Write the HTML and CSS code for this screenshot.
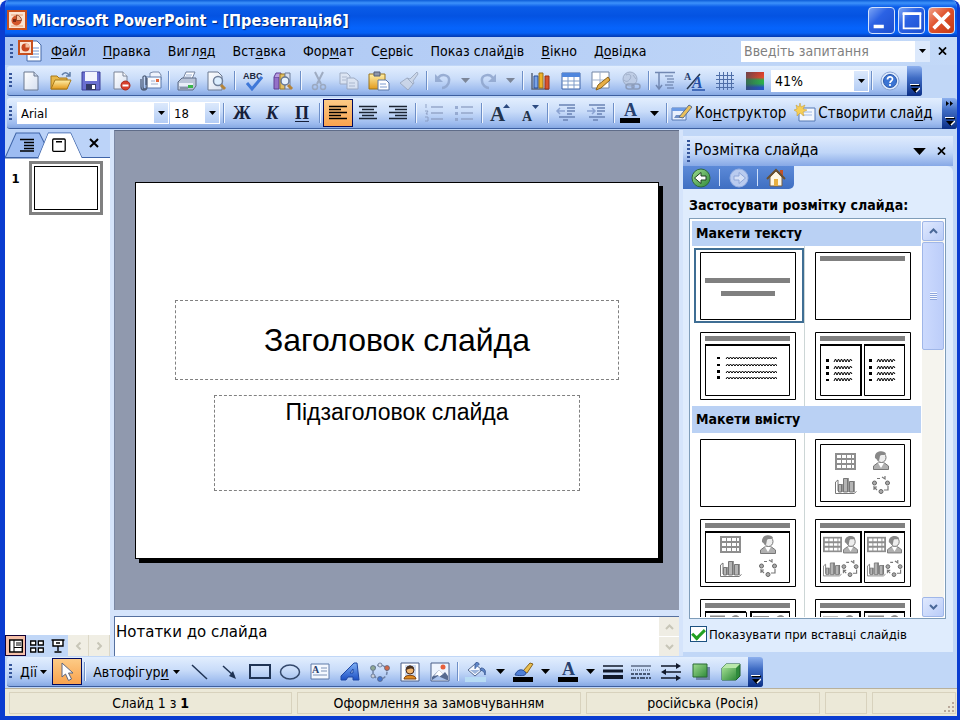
FILE: index.html
```html
<!DOCTYPE html>
<html lang="uk">
<head>
<meta charset="utf-8">
<title>Microsoft PowerPoint - [Презентація6]</title>
<link rel="stylesheet" href="styles.css">
</head>
<body>
<svg class="defs" aria-hidden="true">
  <defs>
    <linearGradient id="gold" x1="0" y1="0" x2="0" y2="1"><stop offset="0" stop-color="#fff0a8"/><stop offset="1" stop-color="#e39a1c"/></linearGradient>
    <linearGradient id="paper" x1="0" y1="0" x2="1" y2="1"><stop offset="0" stop-color="#fff"/><stop offset="1" stop-color="#d5dff0"/></linearGradient>
    <linearGradient id="grn" x1="0" y1="0" x2="1" y2="1"><stop offset="0" stop-color="#9fdc8f"/><stop offset="1" stop-color="#2f8a3a"/></linearGradient>
    <linearGradient id="bluA" x1="0" y1="0" x2="0" y2="1"><stop offset="0" stop-color="#7fb0f4"/><stop offset="1" stop-color="#1c4fc4"/></linearGradient>
    <linearGradient id="rgb" x1="0" y1="0" x2="0" y2="1"><stop offset="0" stop-color="#d93a2b"/><stop offset=".3" stop-color="#e84a2c"/><stop offset=".45" stop-color="#2fb34a"/><stop offset=".65" stop-color="#2bb04c"/><stop offset=".85" stop-color="#2456c8"/></linearGradient>
    <linearGradient id="shade" x1="0" y1="0" x2="1" y2="0"><stop offset="0" stop-color="#3a4658" stop-opacity=".65"/><stop offset="1" stop-color="#3a4658" stop-opacity="0"/></linearGradient>
  </defs>
  <symbol id="down" viewBox="0 0 9 5"><path d="M0 0h9L4.500 5z"/></symbol>
  <symbol id="more" viewBox="0 0 10 10"><path d="M1 1.500h9" stroke="#000" stroke-width="1.500"/><path d="M0 .5h9" stroke="#fff"/><path d="M1 4h9l-4.500 5z" fill="#000"/><path d="M6 8l4-4" stroke="#fff" stroke-width="1.500"/></symbol>
  <symbol id="chevU" viewBox="0 0 9 6"><path d="M1 5l3.500-3.500L8 5" fill="none" stroke="currentColor" stroke-width="2"/></symbol>
  <symbol id="chevD" viewBox="0 0 9 6"><path d="M1 1l3.500 3.500L8 1" fill="none" stroke="currentColor" stroke-width="2"/></symbol>
  <symbol id="cross" viewBox="0 0 10 9"><path d="M1 .5l8 8M9 .5l-8 8" fill="none" stroke="currentColor" stroke-width="2"/></symbol>
  <symbol id="g-table" viewBox="0 0 21 17"><path d="M0 0h21v17H0z" fill="#8e8e8e"/><path d="M2 2h4v3H2zM7 2h4v3H7zM12 2h4v3h-4zM2 7h4v3H2zM7 7h4v3H7zM12 7h4v3h-4zM2 12h4v3H2zM7 12h4v3H7zM12 12h4v3h-4zM17 2h2v3h-2zM17 7h2v3h-2zM17 12h2v3h-2z" fill="#fff"/></symbol>
  <symbol id="g-man" viewBox="0 0 16 19"><path d="M.5 18.500V15l4-3h7l4 3v3.500z" fill="#b0b0b0" stroke="#777"/><path d="M5 12l3 5 3-5z" fill="#fff"/><ellipse cx="8.500" cy="6.500" rx="4.500" ry="5" fill="#eee" stroke="#777"/><path d="M2 7C1-1 12-1 13 3c-3 2-5 0-6 2l-1 5z" fill="#888"/></symbol>
  <symbol id="g-chart" viewBox="0 0 22 17"><path d="M.5 5v11.500H19l2.500-2M.5 5L3 3v11" fill="none" stroke="#777"/><path d="M3.500 7.500h3V15h-3zM8.500 1.500h4V15h-4zM14.500 4.500h4V15h-4z" fill="#b5b5b5" stroke="#777"/><path d="M7 7v8M13 1v14M19 4v11" stroke="#777" stroke-width="1.500"/></symbol>
  <symbol id="g-cycle" viewBox="0 0 18 18"><g fill="#aaa" stroke="#666"><circle cx="2.500" cy="7" r="2"/><circle cx="15.500" cy="7" r="2"/><circle cx="9" cy="15.500" r="2"/></g><path d="M5 2.500h3M10 1l3 2v-3M12 14h4v-4M5 14l-3-3v3M2 11h3" fill="none" stroke="#777" stroke-width="1.200"/></symbol>
  <symbol id="bul" viewBox="0 0 60 24" preserveAspectRatio="none"><path d="M0 1h3v2H0zM0 8h3v2H0zM0 14h3v3H0zM0 20h3v3H0z"/><path id="zz" d="M9 3l1.500-2L12 3l1.500-2L15 3l1.500-2L18 3l1.500-2L21 3l1.500-2L24 3l1.500-2L27 3l1.500-2L30 3l1.500-2L33 3l1.500-2L36 3l1.500-2L39 3l1.500-2L42 3l1.500-2L45 3l1.500-2L48 3l1.500-2L51 3l1.500-2L54 3l1.500-2L57 3l1.500-2L60 3" fill="none" stroke="#000"/><use href="#zz" y="7"/><use href="#zz" y="14"/><use href="#zz" y="20"/></symbol>
  <symbol id="bul2" viewBox="0 0 27 24"><path d="M0 1h3v3H0zM0 8h3v3H0zM0 14h3v3H0zM0 21h3v2H0z"/><path id="zs" d="M8 4l1.500-3L11 4l1.500-3L14 4l1.500-3L17 4l1.500-3L20 4l1.500-3L23 4l1.500-3L26 3" fill="none" stroke="#000"/><use href="#zs" y="7"/><use href="#zs" y="13"/><use href="#zs" y="19"/></symbol>
  <symbol id="ppt" viewBox="0 0 20 20"><rect x="1" y="1" width="18" height="18" fill="#fbe3d2" stroke="#c8501e" stroke-width="2"/><path d="M4 5h12M4 16h12" stroke="#e9a179"/><circle cx="9.500" cy="10.500" r="5" fill="#d4562a"/><path d="M9.500 10.500V5a5.500 5.500 0 015 5.500z" fill="#f4bfa0" stroke="#7a2a10" stroke-width=".7"/><path d="M6 9h3v3H6z" fill="#7e2712"/></symbol>
</svg>

<div class="window">
  <header class="titlebar">
    <svg class="app" viewBox="0 0 20 20"><use href="#ppt"/></svg>
    <h1>Microsoft PowerPoint - [Презентація6]</h1>
    <button class="cap" aria-label="Згорнути"><svg viewBox="0 0 27 27"><path d="M5 18h11v4H5z" fill="#fff"/></svg></button>
    <button class="cap" aria-label="Розгорнути"><svg viewBox="0 0 27 27"><path d="M5 6h18v16H5z" fill="none" stroke="#fff" stroke-width="2"/><path d="M4 6h20" stroke="#fff" stroke-width="3"/></svg></button>
    <button class="cap close" aria-label="Закрити"><svg viewBox="0 0 27 27"><path d="M5 5l17 17M22 5L5 22" stroke="#fff" stroke-width="4"/></svg></button>
  </header>

  <nav class="menubar">
    <span class="grip"></span>
    <svg class="doc" viewBox="0 0 24 22"><path d="M9 1h10l4 4v16H9z" fill="#fff" stroke="#4468a8"/><path d="M15 8h6M15 11h6M12 14h9M12 17h9" stroke="#6e93cf"/><rect x="1" y="1" width="13" height="13" fill="#fbe3d2" stroke="#c8501e" stroke-width="2"/><circle cx="7.500" cy="7.500" r="4" fill="#c8481e"/><path d="M7.500 7.500V3.500a4 4 0 014 4z" fill="#f4bfa0"/></svg>
    <button><u>Ф</u>айл</button><button><u>П</u>равка</button><button>Вигл<u>я</u>д</button><button>Вст<u>а</u>вка</button><button>Фор<u>м</u>ат</button><button>С<u>е</u>рвіс</button><button>Показ слай<u>д</u>ів</button><button><u>В</u>ікно</button><button>Д<u>о</u>відка</button>
    <div class="ask"><input type="text" placeholder="Введіть запитання" aria-label="Введіть запитання"><button aria-label="Список"><svg class="dn"><use href="#down"/></svg></button></div>
    <button class="x" aria-label="Закрити вікно"><svg><use href="#cross"/></svg></button>
  </nav>

  <div class="row">
    <div class="bar">
      <span class="grip"></span>
      <button class="i" aria-label="Створити"><svg viewBox="0 0 20 20"><path d="M3 1h10l4 4v14H3z" fill="url(#paper)" stroke="#6a7890"/><path d="M13 1v4h4" fill="#cdd8ea" stroke="#6a7890"/></svg></button>
      <button class="i" aria-label="Відкрити"><svg viewBox="0 0 22 20"><path d="M1 18V5h6l2 2h8v11z" fill="#e8b84a" stroke="#a87818"/><path d="M1 18l4-9h16l-4 9z" fill="url(#gold)" stroke="#a87818"/><path d="M12 4c2-3 5-3 7 0M20 1v4h-4" fill="none" stroke="#5f7da8" stroke-width="1.500"/></svg></button>
      <button class="i" aria-label="Зберегти"><svg viewBox="0 0 20 20"><path d="M1 1h18v18H1z" fill="#6a6fd0" stroke="#3a3f98"/><path d="M4 1h12v9H4z" fill="#f2f4fd"/><path d="M5 13h10v6H5z" fill="#343a66"/><path d="M11 14h3v4h-3z" fill="#fff"/></svg></button>
      <button class="i" aria-label="Дозвіл"><svg viewBox="0 0 20 20"><path d="M3 1h9l4 4v13H3z" fill="url(#paper)" stroke="#7a8498"/><path d="M12 1v4h4" fill="#fff" stroke="#7a8498"/><circle cx="14.500" cy="14.500" r="4.500" fill="#d8402c" stroke="#a82818"/><path d="M11.500 14.500h6" stroke="#fff" stroke-width="2"/></svg></button>
      <button class="i" aria-label="Електронна пошта"><svg viewBox="0 0 22 20"><path d="M10 2l3-1h6l2 3v5H10z" fill="#eef3fc" stroke="#7b8cab"/><path d="M6 6h15v11H6z" fill="#f7faff" stroke="#5b78aa"/><path d="M11 13h7M11 10h4" stroke="#9fb0cc"/><path d="M16 8h3v3h-3z" fill="#e0653a"/><path d="M7 7v9a2 2 0 01-4 0V7a1 1 0 013-1v8M1 8v8c0 4 6 4 6 0" fill="none" stroke="#51607c" stroke-width="1.300"/></svg></button>
      <i class="sep"></i>
      <button class="i" aria-label="Друк"><svg viewBox="0 0 20 20"><path d="M6 8l3-7h9l-3 7z" fill="#fff" stroke="#7785a0"/><path d="M9 4h6M8 6h6" stroke="#9db2d6"/><path d="M1 11l4-4h14v8l-3 4H1z" fill="#b9c4d8" stroke="#5d6b86"/><path d="M2 12h14v3H2z" fill="#e9eef8"/><path d="M11 14h5v3h-5z" fill="#39b54a"/><path d="M3 17h8" stroke="#56627a"/></svg></button>
      <button class="i" aria-label="Перегляд"><svg viewBox="0 0 20 20"><path d="M1 1h10l4 4v14H1z" fill="url(#paper)" stroke="#6a7890"/><circle cx="11" cy="10" r="4.500" fill="#dceeff" stroke="#6f7f9a" stroke-width="1.500"/><path d="M14 14l4 4" stroke="#b5843a" stroke-width="3"/></svg></button>
      <i class="sep"></i>
      <button class="i" aria-label="Правопис"><svg viewBox="0 0 22 20"><text x="1" y="8" class="abc">ABC</text><path d="M5 12l5 6L20 6" fill="none" stroke="#3f78d8" stroke-width="3"/></svg></button>
      <button class="i" aria-label="Довідники"><svg viewBox="0 0 20 20"><path d="M1 6h5v12H1z" fill="#9470c8" stroke="#5e3f94"/><path d="M1 6l2-4h5v4" fill="#b89be0" stroke="#5e3f94"/><path d="M7 3h5v15H7z" fill="#e3c065" stroke="#9a7a24"/><path d="M12 2h5v16h-5z" fill="#d7dfef" stroke="#6f7f9a"/><circle cx="12" cy="10" r="4" fill="#e5f2ff" stroke="#667794" stroke-width="1.500"/><path d="M15 14l4 4" stroke="#b5843a" stroke-width="3"/></svg></button>
      <i class="sep"></i>
      <button class="i off" disabled aria-label="Вирізати"><svg viewBox="0 0 20 20"><g fill="none" stroke="#97a3b8"><path d="M6 1l6 12M14 1L8 13" stroke-width="2"/><circle cx="6" cy="16" r="2.500" stroke-width="1.500"/><circle cx="14" cy="16" r="2.500" stroke-width="1.500"/></g></svg></button>
      <button class="i off" disabled aria-label="Копіювати"><svg viewBox="0 0 20 20"><g fill="#dfe6f2" stroke="#98a4ba"><path d="M1 2h7l3 3v8H1z"/><path d="M8 7h7l4 3v8H8z"/></g><path d="M3 6h5M3 9h4M10 12h6M10 15h6" stroke="#a9b4c8"/></svg></button>
      <button class="i" aria-label="Вставити"><svg viewBox="0 0 22 20"><path d="M1 3h16v15H1z" fill="url(#gold)" stroke="#9a741c"/><path d="M6 1h6v4H6z" fill="#8e97ab" stroke="#525c74"/><path d="M10 9h8l3 3v7H10z" fill="#fff" stroke="#5b78aa"/><path d="M12 13h6M12 16h7" stroke="#7d9bd0"/></svg></button>
      <button class="i off" disabled aria-label="Формат за зразком"><svg viewBox="0 0 20 20"><path d="M18 1l-7 7-3-1-7 5 8 7 6-7-1-2 5-7z" fill="#ccd6e6" stroke="#9aa7bd"/><path d="M8 7l6 6" stroke="#9aa7bd"/></svg></button>
      <i class="sep"></i>
      <button class="i n off" disabled aria-label="Скасувати"><svg viewBox="0 0 20 20"><path d="M5 7c4-5 12-3 11 3 0 4-4 7-7 7" fill="none" stroke="#8fa5cd" stroke-width="2.500"/><path d="M2 3v8h8z" fill="#8fa5cd"/></svg></button>
      <button class="a off" disabled aria-label="Скасувати, список"><svg class="dn"><use href="#down"/></svg></button>
      <button class="i n off" disabled aria-label="Повторити"><svg viewBox="0 0 20 20"><path d="M15 7C11 2 3 4 4 10c0 4 4 7 7 7" fill="none" stroke="#8fa5cd" stroke-width="2.500"/><path d="M18 3v8h-8z" fill="#8fa5cd"/></svg></button>
      <button class="a off" disabled aria-label="Повторити, список"><svg class="dn"><use href="#down"/></svg></button>
      <i class="sep"></i>
      <button class="i" aria-label="Діаграма"><svg viewBox="0 0 20 20"><path d="M1 2v16h17" fill="none" stroke="#59657c" stroke-width="1.500"/><path d="M3 5h4v12H3z" fill="#7aa4e8" stroke="#284c94"/><path d="M8 2h4v15H8z" fill="#efb42a" stroke="#98701a"/><path d="M14 5h4v13h-4z" fill="#d8542c" stroke="#983018"/></svg></button>
      <button class="i" aria-label="Таблиця"><svg viewBox="0 0 20 18"><path d="M1 1h18v16H1z" fill="#fff" stroke="#3c63a8"/><path d="M1 1h18v4H1z" fill="#4f86dd"/><path d="M1 9h18M1 13h18M7 5v12M13 5v12" stroke="#7f9bc8"/></svg></button>
      <button class="i" aria-label="Таблиці та межі"><svg viewBox="0 0 20 20"><path d="M1 1h17v16H1z" fill="#fff" stroke="#7587a5"/><path d="M1 9h17M9 1v16" stroke="#9fb0cc"/><path d="M5 19l2-5 10-8 2 3-9 8z" fill="#e7ae45" stroke="#8a621a"/></svg></button>
      <button class="i off" disabled aria-label="Гіперпосилання"><svg viewBox="0 0 20 20"><circle cx="9" cy="8" r="7" fill="#bccae2" stroke="#97a5bf"/><path d="M5 4c4-2 6 1 4 4s-4 3-6 1M12 4l3 4" fill="none" stroke="#98a7c2"/><rect x="5" y="13" width="8" height="5" rx="2.500" fill="none" stroke="#8796b2" stroke-width="1.500"/><rect x="11" y="13" width="8" height="5" rx="2.500" fill="none" stroke="#8796b2" stroke-width="1.500"/></svg></button>
      <i class="sep t"></i>
      <button class="i" aria-label="Розгорнути все"><svg viewBox="0 0 20 20"><path d="M0 1.500h20M4 2v15M1 14l3 4 3-4" fill="none" stroke="#7288b2" stroke-width="1.500"/><path d="M10 5h8M12 8h7M12 11h7M10 14h8M12 17h7" stroke="#5f759e"/></svg></button>
      <button class="i" aria-label="Показати форматування"><svg viewBox="0 0 22 20"><text x="0" y="9" class="s9">A</text><path d="M3 18L16 3" stroke="#26374f" stroke-width="1.500"/><text x="8" y="17" class="s15">A</text><path d="M8 19h13" stroke="#2450a8" stroke-width="1.500"/></svg></button>
      <button class="i" aria-label="Сітка"><svg viewBox="0 0 20 20"><path d="M4.500 1v18M8.500 1v18M12.500 1v18M16.500 1v18M1 4.500h18M1 8.500h18M1 12.500h18M1 16.500h18" stroke="#4f6ea8"/></svg></button>
      <button class="i" aria-label="Колір"><svg viewBox="0 0 20 20"><path d="M1 1h18v18H1z" fill="url(#rgb)"/><path d="M1 1h18v18H1z" fill="url(#shade)"/></svg></button>
      <span class="combo zoom"><select aria-label="Масштаб"><option>41%</option></select><svg class="dn"><use href="#down"/></svg></span>
      <i class="sep"></i>
      <button class="i" aria-label="Довідка"><svg viewBox="0 0 20 20"><circle cx="10" cy="10" r="9" fill="#dbe8fb" stroke="#8aa4d4"/><circle cx="10" cy="10" r="6.500" fill="#3b74d4" stroke="#2856a8"/><path d="M7.500 8.500c0-3.500 5-3.500 5-.5 0 2-2.500 2-2.500 4M10 13v2" fill="none" stroke="#fff" stroke-width="1.700"/></svg></button>
      <button class="end" aria-label="Параметри панелі"><svg><use href="#more"/></svg></button>
    </div>
  </div>

  <div class="row fmt">
    <div class="bar full">
      <span class="grip"></span>
      <span class="combo font"><select aria-label="Шрифт"><option>Arial</option></select><svg class="dn"><use href="#down"/></svg></span>
      <span class="combo size"><select aria-label="Розмір шрифту"><option>18</option></select><svg class="dn"><use href="#down"/></svg></span>
      <i class="sep"></i>
      <button class="i l">Ж</button><button class="i l"><em>К</em></button><button class="i l"><u>П</u></button>
      <i class="sep"></i>
      <button class="i on" aria-label="За лівим краєм"><svg viewBox="0 0 20 20"><path d="M1 3.500h18M1 6.500h12M1 9.500h18M1 12.500h12M1 15.500h18" stroke="#000" stroke-width="1.500"/></svg></button>
      <button class="i" aria-label="По центру"><svg viewBox="0 0 20 20"><path d="M1 3.500h18M4 6.500h12M1 9.500h18M4 12.500h12M1 15.500h18" stroke="#1b2433" stroke-width="1.500"/></svg></button>
      <button class="i" aria-label="За правим краєм"><svg viewBox="0 0 20 20"><path d="M1 3.500h18M7 6.500h12M1 9.500h18M7 12.500h12M1 15.500h18" stroke="#1b2433" stroke-width="1.500"/></svg></button>
      <i class="sep"></i>
      <button class="i off" disabled aria-label="Нумерація"><svg viewBox="0 0 20 20"><path d="M7 4h12M7 10h12M7 16h12" stroke="#8d9fc2" stroke-width="1.500"/><path d="M2 1v4M1 8h3l-2 3h2M1 14h3v4H1" fill="none" stroke="#8698bd"/></svg></button>
      <button class="i off" disabled aria-label="Маркери"><svg viewBox="0 0 20 20"><path d="M7 4h12M7 10h12M7 16h12" stroke="#8d9fc2" stroke-width="1.500"/><path d="M1 3h3v3H1zM1 9h3v3H1zM1 15h3v3H1z" fill="#8fa3cb"/></svg></button>
      <i class="sep"></i>
      <button class="i" aria-label="Збільшити розмір шрифту"><svg viewBox="0 0 22 20"><text x="1" y="18" class="s20">A</text><path d="M14 5l3.500-4L21 5z" fill="#2c4a80"/></svg></button>
      <button class="i" aria-label="Зменшити розмір шрифту"><svg viewBox="0 0 22 20"><text x="3" y="18" class="s13">A</text><path d="M13 2h7l-3.500 4z" fill="#2c4a80"/></svg></button>
      <i class="sep"></i>
      <button class="i" aria-label="Зменшити відступ"><svg viewBox="0 0 20 20"><path d="M3 2h16M11 5h8M11 8h8M11 11h5M3 14h16M7 17h5" stroke="#6a82b4" stroke-width="1.500"/><path d="M9 8H2M4 5L1 8l3 3" fill="none" stroke="#8ba3d2" stroke-width="1.500"/></svg></button>
      <button class="i" aria-label="Збільшити відступ"><svg viewBox="0 0 20 20"><path d="M3 2h16M11 5h8M11 8h8M11 11h5M3 14h16M7 17h5" stroke="#6a82b4" stroke-width="1.500"/><path d="M1 8h7M6 5l3 3-3 3" fill="none" stroke="#8ba3d2" stroke-width="1.500"/></svg></button>
      <i class="sep t"></i>
      <button class="i" aria-label="Колір шрифту"><svg viewBox="0 0 20 20"><text x="4" y="13" class="s17">A</text><path d="M0 15h20v5H0z"/></svg></button>
      <button class="a" aria-label="Колір шрифту, список"><svg class="dn"><use href="#down"/></svg></button>
      <i class="sep"></i>
      <button class="txt"><svg viewBox="0 0 22 20"><path d="M1 5h14v12H1z" fill="#e9f1fd" stroke="#5578b4"/><path d="M1 5h14v3H1z" fill="#6c9be4"/><path d="M5 12h7v3H3z" fill="#6f8fc4"/><path d="M8 14l10-12 3 2-9 11z" fill="#e9c05a" stroke="#5a6c8a"/></svg><span>Ко<u>н</u>структор</span></button>
      <button class="txt"><svg viewBox="0 0 22 20"><path d="M5 5h16v13H5z" fill="#f3f7fe" stroke="#5578b4"/><path d="M8 9h10M8 12h10" stroke="#9eb8e4"/><path d="M6 0l1 4 4-2-2 4 4 1-4 2 1 4-4-3-3 3V9L0 7l3-1-1-4 3 2z" fill="#f6cf58" stroke="#c59628" stroke-width=".5"/></svg><span>Створити сла<u>й</u>д</span></button>
      <button class="end" aria-label="Параметри панелі"><svg class="raq" viewBox="0 0 8 6"><path d="M0 0l3 2.500L0 5zM4 0l3 2.500L4 5z"/></svg><svg><use href="#more"/></svg></button>
    </div>
  </div>

  <main class="work">
    <section class="outline">
      <div class="tabs">
        <svg class="tabshape" viewBox="0 0 104 26" preserveAspectRatio="none"><path d="M0 26L11 1h23l6 12-7 13z" fill="#9dbcf2" stroke="#3f64a8"/><path d="M0 25.500h33L43 1h22l11 24.500h28" fill="none" stroke="#3f64a8"/><path d="M33 26L43 1.500h22L76 26z" fill="#fff"/></svg>
        <button aria-label="Структура"><svg viewBox="0 0 14 14"><path d="M0 1.500h14M4 4.500h10M4 7.500h10M4 10.500h10M0 13h14" stroke="#000" stroke-width="1.500"/></svg></button>
        <button aria-label="Слайди"><svg viewBox="0 0 14 14"><rect x=".7" y="1" width="12.500" height="12.300" rx="1" fill="#fff" stroke="#000" stroke-width="1.300"/><path d="M4 3.700h6" stroke="#000" stroke-width="1.500"/></svg></button>
        <button class="tx" aria-label="Закрити"><svg><use href="#cross"/></svg></button>
      </div>
      <div class="thumbs"><b>1</b><button class="thumb" aria-label="Слайд 1"><span></span></button></div>
      <div class="views">
        <button class="on" aria-label="Звичайний"><svg viewBox="0 0 14 14"><path d="M.7 1h12.600v12H.7z" fill="#fff" stroke="#000" stroke-width="1.400"/><path d="M5 1v12M5 8.500h8M7 4h5M7 6h5" stroke="#000"/></svg></button>
        <button aria-label="Сортувальник"><svg viewBox="0 0 14 14"><path d="M.7 2h5v4h-5zM8.300 2h5v4h-5zM.7 9h5v4h-5zM8.300 9h5v4h-5z" fill="#fff" stroke="#000" stroke-width="1.300"/></svg></button>
        <button aria-label="Показ слайдів"><svg viewBox="0 0 14 14"><path d="M2 1.500h10V7H2z" fill="#fff"/><path d="M.5 1h13M2 1v6h10V1M5 4h4M7 7v5M3.500 13h7" fill="none" stroke="#000" stroke-width="1.400"/></svg></button>
        <button class="dis l" disabled aria-label="Ліворуч"><svg><use href="#chevU"/></svg></button>
        <button class="dis r" disabled aria-label="Праворуч"><svg><use href="#chevD"/></svg></button>
      </div>
    </section>

    <section class="center">
      <div class="stage"><div class="slide"><div class="ph title">Заголовок слайда</div><div class="ph sub">Підзаголовок слайда</div></div></div>
      <div class="notes"><p>Нотатки до слайда</p><div class="nscroll"><button disabled aria-label="Вгору"><svg><use href="#chevU"/></svg></button><button disabled aria-label="Вниз"><svg><use href="#chevD"/></svg></button></div></div>
    </section>

    <aside class="task">
      <header><span class="grip"></span><h2>Розмітка слайда</h2><button aria-label="Інші області"><svg class="big"><use href="#down"/></svg></button><button aria-label="Закрити"><svg class="tc"><use href="#cross"/></svg></button></header>
      <div class="tbody">
        <div class="nav">
          <button aria-label="Назад"><svg viewBox="0 0 20 20"><circle cx="10" cy="10" r="9" fill="url(#grn)" stroke="#2f6a3a"/><path d="M3.500 10L10 4.500V8h5v4h-5v3.500z" fill="#fff" stroke="#1f3f24"/></svg></button><i></i>
          <button disabled aria-label="Вперед"><svg viewBox="0 0 20 20"><circle cx="10" cy="10" r="9" fill="#b9cbef" stroke="#98b1e2"/><path d="M16.500 10L10 4.500V8H5v4h5v3.500z" fill="#d6e1f7" stroke="#8ea6d8"/></svg></button><i></i>
          <button aria-label="Додому"><svg viewBox="0 0 20 20"><path d="M14 2h3v6h-3z" fill="#c0522a"/><path d="M4 9l6-6 6 6v9H4z" fill="#fff8e6" stroke="#7a6040"/><path d="M1 11l9-9 9 9" fill="none" stroke="#6a5030" stroke-width="2"/><path d="M8 11h4v7H8z" fill="#e8b040"/></svg></button>
        </div>
        <h3>Застосувати розмітку слайда:</h3>
        <div class="list">
          <div class="items">
            <h4>Макети тексту</h4>
            <div class="grid">
              <button class="sel" aria-label="Титульний слайд"><svg viewBox="0 0 96 68"><path class="f" d="M.5.5h95v67H.5z"/><path class="g" d="M5 26h85v5H5zM21 39h54v5H21z"/></svg></button>
              <button aria-label="Лише заголовок"><svg viewBox="0 0 96 68"><path class="f" d="M.5.5h95v67H.5z"/><path class="g" d="M5 4h85v5H5z"/></svg></button>
              <button aria-label="Заголовок і текст"><svg viewBox="0 0 96 68"><path class="f" d="M.5.5h95v67H.5z"/><path class="g" d="M5 4h85v5H5z"/><path class="f" d="M5.500 13.500h84v50h-84z"/><path d="M5 13h85" stroke="#000" stroke-width="2"/><use href="#bul" x="17" y="24" width="60" height="24"/></svg></button>
              <button aria-label="Заголовок і текст у дві колонки"><svg viewBox="0 0 96 68"><path class="f" d="M.5.5h95v67H.5z"/><path class="g" d="M5 4h85v5H5z"/><path class="f" d="M5.500 13.500h41v50h-41zM49.500 13.500h40v50h-40z"/><path d="M5 13h41v51M49 13h41" fill="none" stroke="#000" stroke-width="2"/><use href="#bul2" x="11" y="26" width="27" height="24"/><use href="#bul2" x="54" y="26" width="27" height="24"/></svg></button>
            </div>
            <h4>Макети вмісту</h4>
            <div class="grid">
              <button aria-label="Порожній слайд"><svg viewBox="0 0 96 68"><path class="f" d="M.5.5h95v67H.5z"/></svg></button>
              <button aria-label="Вміст"><svg viewBox="0 0 96 68"><path class="f" d="M.5.5h95v67H.5zM5.500 5.500h84v57h-84z"/><use href="#g-table" x="20" y="14" width="21" height="17"/><use href="#g-man" x="58" y="12" width="16" height="19"/><use href="#g-chart" x="20" y="38" width="22" height="17"/><use href="#g-cycle" x="57" y="37" width="18" height="18"/></svg></button>
              <button aria-label="Заголовок і вміст"><svg viewBox="0 0 96 68"><path class="f" d="M.5.5h95v67H.5z"/><path class="g" d="M5 4h85v5H5z"/><path class="f" d="M5.500 13.500h84v50h-84z"/><path d="M5 13h85" stroke="#000" stroke-width="2"/><use href="#g-table" x="20" y="17" width="21" height="17"/><use href="#g-man" x="60" y="16" width="16" height="19"/><use href="#g-chart" x="20" y="41" width="22" height="17"/><use href="#g-cycle" x="59" y="40" width="18" height="18"/></svg></button>
              <button aria-label="Заголовок і два об’єкти"><svg viewBox="0 0 96 68"><path class="f" d="M.5.5h95v67H.5z"/><path class="g" d="M5 4h85v5H5z"/><path class="f" d="M5.500 13.500h41v50h-41zM49.500 13.500h40v50h-40z"/><path d="M5 13h41v51M49 13h41" fill="none" stroke="#000" stroke-width="2"/><use href="#g-table" x="8" y="17" width="19" height="17"/><use href="#g-man" x="28" y="16" width="15" height="19"/><use href="#g-chart" x="8" y="41" width="19" height="18"/><use href="#g-cycle" x="26" y="41" width="18" height="17"/><use href="#g-table" x="52" y="17" width="19" height="17"/><use href="#g-man" x="72" y="16" width="15" height="19"/><use href="#g-chart" x="52" y="41" width="19" height="18"/><use href="#g-cycle" x="70" y="41" width="18" height="17"/></svg></button>
              <button aria-label="Об’єкт і два об’єкти"><svg viewBox="0 0 96 68"><path class="f" d="M.5.5h95v67H.5z"/><path class="g" d="M5 4h85v5H5z"/><path class="f" d="M5.500 13.500h41v50h-41zM50.500 13.500h39v50h-39z"/><path d="M5 13h41M51 64V13h39" fill="none" stroke="#000" stroke-width="2"/><path d="M10 18h15" stroke="#888" stroke-width="3"/><use href="#g-man" x="29" y="16" width="13" height="14"/><use href="#g-table" x="53" y="17" width="16" height="13"/><use href="#g-man" x="74" y="16" width="13" height="14"/></svg></button>
              <button aria-label="Два об’єкти й об’єкт"><svg viewBox="0 0 96 68"><path class="f" d="M.5.5h95v67H.5z"/><path class="g" d="M5 4h85v5H5z"/><path class="f" d="M5.500 13.500h39v50h-39zM49.500 13.500h40v50h-40z"/><path d="M5 13h40v51M49 13h41" fill="none" stroke="#000" stroke-width="2"/><use href="#g-table" x="8" y="17" width="15" height="13"/><use href="#g-man" x="28" y="16" width="13" height="14"/><path d="M53 18h16" stroke="#888" stroke-width="3"/><use href="#g-man" x="73" y="16" width="13" height="14"/></svg></button>
            </div>
          </div>
          <div class="vscroll"><button aria-label="Вгору"><svg><use href="#chevU"/></svg></button><span class="knob"></span><button aria-label="Вниз"><svg><use href="#chevD"/></svg></button></div>
        </div>
        <label class="check"><input type="checkbox" checked>Показувати при вставці слайдів</label>
      </div>
    </aside>
  </main>

  <div class="row draw">
    <div class="bar">
      <span class="grip"></span>
      <button class="txt acts"><span><u>Д</u>ії</span><svg class="dn"><use href="#down"/></svg></button>
      <button class="i on" aria-label="Вибір об’єктів"><svg viewBox="0 0 20 20"><path d="M5 1v14l3.500-3 3 6.500 3-1.500-3-6H16z" fill="#fff" stroke="#5a6580"/></svg></button>
      <i class="sep"></i>
      <button class="txt shapes"><span>Автофігур<u>и</u></span><svg class="dn"><use href="#down"/></svg></button>
      <button class="i" aria-label="Лінія"><svg viewBox="0 0 20 20"><path d="M2 3l15 14" stroke="#1f3354" stroke-width="1.500"/></svg></button>
      <button class="i" aria-label="Стрілка"><svg viewBox="0 0 20 20"><path d="M3 4l11 10" stroke="#1f3354" stroke-width="1.500"/><path d="M16 17l-7-3 4-5z" fill="#1f3354"/></svg></button>
      <button class="i" aria-label="Прямокутник"><svg viewBox="0 0 20 20"><path d="M0 3h20v13H0z" fill="none" stroke="#1f3354" stroke-width="2"/></svg></button>
      <button class="i" aria-label="Овал"><svg viewBox="0 0 20 20"><ellipse cx="10" cy="10" rx="9.500" ry="7" fill="none" stroke="#33486c" stroke-width="1.500"/></svg></button>
      <button class="i" aria-label="Напис"><svg viewBox="0 0 20 20"><path d="M1 2h18v15H1z" fill="#f4f8ff" stroke="#5f7ba8"/><text x="2" y="11" class="s9">A</text><path d="M11 6h6M11 9h6M3 13h14" stroke="#7c92b6"/></svg></button>
      <button class="i" aria-label="WordArt"><svg viewBox="0 0 20 20"><path d="M1 14L14 1h3l2 17h-6v-3H8l-2 3H1zM10 11h3V7z" fill="url(#bluA)" stroke="#1f48a4"/></svg></button>
      <button class="i" aria-label="Діаграма"><svg viewBox="0 0 20 20"><circle cx="10" cy="10" r="7" fill="none" stroke="#6f82a5" stroke-width="1.500" stroke-dasharray="3 2"/><g stroke="#51627f" stroke-width=".7"><circle cx="3" cy="6" r="2.500" fill="#8fa894"/><circle cx="17" cy="6" r="2.500" fill="#d06848"/><circle cx="10" cy="17" r="2.500" fill="#4878d0"/><circle cx="3" cy="14" r="2" fill="#c8ced8"/><circle cx="10" cy="3" r="2" fill="#d8deea"/></g></svg></button>
      <button class="i" aria-label="Картинка"><svg viewBox="0 0 20 20"><path d="M1 1h18v18H1z" fill="#fff" stroke="#4a5f88"/><path d="M5 3h11v14H5z" fill="#ccd9ee"/><path d="M4 17c0-5 12-5 12 0z" fill="#e08a1e" stroke="#7a4010"/><circle cx="10" cy="8" r="4" fill="#f1b46c" stroke="#4a2a18"/><path d="M6 8c0-6 8-6 8 0-3-3-5-1-8 0z" fill="#4a3424"/></svg></button>
      <button class="i" aria-label="Рисунок"><svg viewBox="0 0 20 20"><path d="M1 1h18v18H1z" fill="#eef4fe" stroke="#4a5f88"/><path d="M2 18v-3l7-7 4 4 2-2 3 4v4z" fill="#566a90"/><path d="M9 8l-5 6 4-1 1 2 4-3z" fill="#fff"/><path d="M2 18l6-4 9 4z" fill="#a9c2ec"/><circle cx="13" cy="5" r="2.500" fill="#e8603c"/></svg></button>
      <i class="sep"></i>
      <button class="i" aria-label="Колір заливки"><svg viewBox="0 0 22 20"><path d="M0 15h21v5H0z" fill="#b8dcf4"/><path d="M3 8l7-6 7 6-7 6z" fill="#f6f9ff" stroke="#54688e"/><path d="M5 8h10l-5 4z" fill="#9db5dc"/><path d="M10 7V2a2 2 0 014 1M16 6c4 0 5 3 4 7-1-4-2-4-5-5z" fill="#5f86c8" stroke="#41609a"/></svg></button>
      <button class="a" aria-label="Колір заливки, список"><svg class="dn"><use href="#down"/></svg></button>
      <button class="i n" aria-label="Колір лінії"><svg viewBox="0 0 20 20"><path d="M0 15h20v5H0z"/><path d="M10 9l7-8 3 1-6 9z" fill="#eabf50" stroke="#86621c"/><path d="M2 13c2-6 8-7 11-2 0 3-5 3-11 2z" fill="#4f7fd6" stroke="#284c94"/></svg></button>
      <button class="a" aria-label="Колір лінії, список"><svg class="dn"><use href="#down"/></svg></button>
      <button class="i n" aria-label="Колір шрифту"><svg viewBox="0 0 20 20"><text x="4" y="13" class="s17">A</text><path d="M0 15h20v5H0z"/></svg></button>
      <button class="a" aria-label="Колір шрифту, список"><svg class="dn"><use href="#down"/></svg></button>
      <button class="i n" aria-label="Тип лінії"><svg viewBox="0 0 20 20"><path d="M0 4h20" stroke="#10182a" stroke-width="1.500"/><path d="M0 9h20" stroke="#10182a" stroke-width="3"/><path d="M0 15h20" stroke="#10182a" stroke-width="4"/></svg></button>
      <button class="i" aria-label="Тип штриха"><svg viewBox="0 0 20 20"><path d="M0 4h20" stroke="#22304a"/><path d="M0 8h20" stroke="#22304a" stroke-dasharray="1 1"/><path d="M0 12h20" stroke="#22304a" stroke-width="1.500" stroke-dasharray="3 1"/><path d="M0 16h20" stroke="#22304a" stroke-width="1.500" stroke-dasharray="5 1 2 1"/></svg></button>
      <button class="i" aria-label="Тип стрілки"><svg viewBox="0 0 20 20"><path d="M0 4h18M2 10h18M0 16h18" stroke="#10182a" stroke-width="1.500"/><path d="M15 1l5 3-5 3zM5 7l-5 3 5 3zM15 13l5 3-5 3z" fill="#10182a"/></svg></button>
      <button class="i" aria-label="Тінь"><svg viewBox="0 0 20 20"><path d="M5 5h14v13H5z" fill="#6f85ac"/><path d="M2 2h14v13H2z" fill="url(#grn)" stroke="#2a6a34"/></svg></button>
      <button class="i" aria-label="Об’єм"><svg viewBox="0 0 20 20"><path d="M1 6l4-4h14v12l-4 4H1z" fill="#2f8a3c" stroke="#1f5c2a"/><path d="M1 6l4-4h14l-4 4z" fill="#b9e8ab"/><path d="M1 6h14v12H1z" fill="url(#grn)"/></svg></button>
      <button class="end" aria-label="Параметри панелі"><svg><use href="#more"/></svg></button>
    </div>
  </div>

  <footer class="status"><span>Слайд 1 з <b>1</b></span><span>Оформлення за замовчуванням</span><span>російська (Росія)</span><span></span><span class="size-grip"><svg viewBox="0 0 12 12"><path d="M9 1h2v2H9zM5 5h2v2H5zM9 5h2v2H9zM1 9h2v2H1zM5 9h2v2H5zM9 9h2v2H9z" fill="#b9a99a"/></svg></span></footer>
</div>
</body>
</html>
```

FILE: styles.css
```css
* { box-sizing: border-box; }
html, body { margin: 0; height: 100%; }
body { font: 14px "DejaVu Sans Condensed", "DejaVu Sans", sans-serif; color: #000; background: #fff; overflow: hidden; }
button, input, select { font: inherit; color: inherit; margin: 0; padding: 0; border: 0; border-radius: 0; background: none; }
h1, h2, h3, h4, p { margin: 0; font-size: inherit; }
svg { display: block; overflow: visible; }
.defs { position: absolute; width: 0; height: 0; overflow: hidden; }
u { text-underline-offset: 2px; }

.window { height: 100vh; min-height: 480px; display: flex; flex-direction: column; background: #c1d7f7; border: solid #0a3cd0; border-width: 0 3px 4px 5px; border-radius: 8px 8px 0 0; overflow: hidden; }

.titlebar { flex: none; height: 37px; display: flex; align-items: center; gap: 3px; padding: 3px 5px 0 7px; margin: 0 -3px 0 -5px; background: linear-gradient(#0c5cd8 0, #3d92fa 3px, #0a5ce8 7px, #0453e2 16px, #0664fc 28px, #0560f4 33px, #0238b0 37px); }
.titlebar h1 { flex: 1; padding: 2px 0 0 2px; color: #fff; font-size: 16px; line-height: 20px; text-shadow: 1px 1px 1px #00247a; white-space: nowrap; }
.app { width: 20px; height: 20px; }
.cap { width: 27px; height: 27px; border: 1px solid #d4e2fb; border-radius: 4px; background: linear-gradient(135deg, #7ba4f5, #2b62e4 40%, #1c4fd0); }
.cap svg { width: 25px; height: 25px; }
.cap.close { background: linear-gradient(135deg, #f0a088, #e0522c 45%, #c43a14); }

.menubar { flex: none; height: 28px; display: flex; align-items: center; padding: 0 10px 0 4px; background: linear-gradient(90deg, #a9c4f3, #c3d9f8); }
.menubar > button { margin-right: 17px; }
.grip { flex: none; width: 3px; height: 15px; margin: 0 4px 0 1px; background: repeating-linear-gradient(#35559a 0 2px, transparent 2px 4px); }
.doc { width: 24px; height: 22px; margin: 0 9px 0 1px; }
.ask { display: flex; width: 189px; height: 21px; margin-left: auto; background: #fff; }
.ask input { flex: 1; min-width: 0; padding-left: 3px; outline: 0; }
.ask input::placeholder { color: #808080; opacity: 1; }
.ask button { width: 15px; background: #dce9fc; display: grid; place-items: center; }
.dn { width: 7px; height: 4px; }
.menubar .x { margin: 0 0 0 8px; }
.x svg { width: 9px; height: 8px; }

.row { flex: none; display: flex; padding: 1px 0 1px 2px; height: 32px; }
.row.fmt { height: 33px; }
.bar { display: flex; align-items: stretch; background: linear-gradient(#e2eefe, #c9dcf9 45%, #9dbbee 85%, #86a8e2); border-bottom: 1px solid #3d5f9f; border-radius: 3px; padding-left: 1px; }
.bar.full { flex: 1; }
.bar .grip { align-self: center; }
.bar button:not(.end) { display: flex; align-items: center; justify-content: center; }
.bar .i { flex: none; width: 30px; }
.i svg { width: 20px; height: 20px; }
.i svg[viewBox="0 0 22 20"] { width: 22px; }
.bar .n { width: 26px; }
.i.on { margin: 1px 0; border: 1px solid #000a60; background: linear-gradient(#fdcb86, #f9a34e); }
.i.off { opacity: .85; }
.a { flex: none; width: 19px; }
.bar .a .dn { width: 9px; height: 5px; }
.a.off { fill: #7c8698; }
.sep { flex: none; width: 6px; margin: 5px 0; background: linear-gradient(90deg, transparent 2px, #6d8fc8 2px 3px, #f1f6fe 3px 4px, transparent 4px); }
.sep.t { width: 4px; }
.end { flex: none; width: 15px; margin: 0 0 -1px 2px; display: flex; flex-direction: column; align-items: center; justify-content: flex-end; padding-bottom: 2px; background: linear-gradient(#8db0ee, #3f6cc4 40%, #0b2f86); border-radius: 0 3px 3px 0; }
.end svg { width: 10px; height: 10px; }
.end .raq { width: 8px; height: 6px; margin-bottom: 10px; }
.abc { font: bold 9px "Liberation Sans", sans-serif; fill: #1c2840; }
.s9, .s13, .s15, .s17, .s20 { font-family: "Liberation Serif", serif; font-weight: bold; fill: #27406e; }
.s9 { font-size: 10px; }
.s13 { font-size: 14px; fill: #22324a; }
.s15 { font-size: 16px; font-style: italic; fill: #2450a8; }
.s17 { font-size: 18px; }
.s20 { font-size: 21px; fill: #22324a; }
.i.l { font: bold 18px "Liberation Serif", serif; color: #16203a; }

.combo { display: grid; grid-template-columns: 1fr 14px; align-items: center; background: linear-gradient(#dce9fc, #b4cdf5) right / 14px 100% no-repeat #fff; border: 1px solid #fff; margin: 4px 0 3px 1px; height: 22px; }
.combo select { grid-area: 1 / 1 / 2 / 3; appearance: none; width: 100%; height: 100%; padding-left: 3px; }
.combo svg { grid-area: 1 / 2; justify-self: center; pointer-events: none; }
.combo.font { width: 152px; font-size: 13px; }
.combo.size { width: 50px; margin-right: 1px; font-size: 13px; }
.combo.zoom { width: 98px; }
.txt { flex: none; gap: 3px; margin-left: 2px; white-space: nowrap; }
.full .txt { gap: 2px; margin-left: 1px; font-size: 15px; }
.full .txt + .txt { margin-left: 8px; }
.txt svg[viewBox] { width: 22px; height: 20px; }
.bar.full .end { margin-left: auto; }

.work { flex: 1; min-height: 0; display: grid; grid-template-columns: 105px minmax(0, 1fr) 274px; column-gap: 4px; background: #d5e4fb; }
.outline { display: flex; flex-direction: column; background: #fff; min-height: 0; }
.tabs { position: relative; flex: none; height: 28px; display: flex; align-items: center; background: #bcd3f8; padding: 2px 0 0 15px; gap: 18px; }
.tabshape { position: absolute; inset: 2px 0 0; width: 100%; height: 26px; }
.tabs button { position: relative; }
.tabs button svg { width: 14px; height: 14px; }
.tabs .tx { margin-left: 5px; padding-bottom: 4px; }
.tabs .tx svg { width: 10px; height: 10px; }
.thumbs { flex: 1; display: flex; gap: 8px; padding: 3px 7px 0 5px; align-items: flex-start; }
.thumbs b { padding-top: 10px; width: 11px; text-align: center; font-size: 13px; }
.thumb { flex: 1; height: 54px; border: 3px solid #808080; padding: 2px; background: #fff; display: flex; }
.thumb span { flex: 1; height: 100%; align-self: stretch; border: 1px solid #000; }
.views { flex: none; height: 21px; display: flex; background: #c1d7f7; }
.views button { width: 21px; display: grid; place-items: center; }
.views svg { width: 14px; height: 14px; }
.views .on { background: #f5c0a8; border: 1px solid #103; }
.views .dis { color: #c8c6b8; background: #f0eee4; border-right: 1px solid #dcd8c8; }
.views .dis svg { width: 9px; height: 6px; transform: rotate(-90deg); }

.center { display: flex; flex-direction: column; min-height: 0; }
.stage { flex: 1; min-height: 0; display: flex; align-items: center; justify-content: center; background: #9099ae; border-top: 1px solid #5f6c88; border-left: 1px solid #7b88a4; }
.slide { width: 93%; aspect-ratio: 523 / 375; background: #fff; border: 1px solid #000; box-shadow: 4px 4px 0 #000; display: flex; flex-direction: column; align-items: center; justify-content: flex-end; padding-bottom: 67px; font-family: "Liberation Sans", Arial, sans-serif; gap: 15px; }
.ph { border: 1px dashed #808080; text-align: center; }
.ph.title { width: 85%; height: 80px; font-size: 32px; line-height: 78px; }
.ph.sub { width: 70%; height: 96px; font-size: 23px; line-height: 32px; }
.notes { flex: none; height: 40px; margin-top: 6px; display: flex; background: #fff; border: solid #55709f; border-width: 1px 0 0 1px; }
.notes p { flex: 1; padding: 6px 1px; font: 15px "DejaVu Sans", sans-serif; }
.nscroll { width: 20px; display: flex; flex-direction: column; gap: 1px; background: #fff; }
.nscroll button { flex: 1; display: grid; place-items: center; background: #efede4; color: #c8c6b8; }
.nscroll svg { width: 9px; height: 6px; }

.task { display: flex; flex-direction: column; min-height: 0; padding: 6px 4px 4px 0; background: #c1d7f7; }
.task header { flex: none; height: 30px; display: flex; align-items: center; padding: 0 7px 0 3px; background: linear-gradient(#dfebfd, #c0d6f8 55%, #86a8e6); }
.task .grip { height: 22px; }
.task h2 { flex: 1; font-weight: normal; font-size: 16px; line-height: 20px; padding-bottom: 3px; }
.task header button { padding: 2px 0 2px 11px; }
.big { width: 13px; height: 7px; }
.tc { width: 9px; height: 8px; }
.tbody { flex: 1; min-height: 0; display: flex; flex-direction: column; background: #dfecfd; border-radius: 0 6px 0 0; padding: 0 7px 8px 6px; }
.nav { flex: none; align-self: flex-start; width: 111px; height: 23px; margin-left: -6px; padding: 0 8px; display: flex; align-items: center; justify-content: space-between; background: linear-gradient(#5c8ad8, #3f6fc2); border-radius: 0 0 5px 0; }
.nav svg { width: 20px; height: 20px; }
.nav i { width: 1px; height: 17px; background: #cfe0fb; }
.task h3 { flex: none; padding-top: 7px; height: 29px; line-height: 18px; white-space: nowrap; }
.list { flex: 1; min-height: 0; display: flex; border: 1px solid #7f9db9; padding: 2px 1px 1px 2px; background: #fff; overflow: hidden; }
.items { flex: 1; min-width: 0; overflow: hidden; }
.items h4 { height: 25px; line-height: 25px; padding-left: 4px; background: #bad1f4; }
.grid + h4 { height: 27px; line-height: 27px; }
.grid { display: grid; grid-template-columns: 1fr 1fr; grid-auto-rows: 80px; background: linear-gradient(#ccd6d6, #ccd6d6) 49% 0 / 1px 100% no-repeat; }
.grid button { display: flex; justify-content: center; align-items: flex-start; padding: 4px 2px 0 0; margin: 2px 2px 3px 2px; }
.grid .sel { border: 2px solid #3f6e94; padding: 2px 1px 0 0; margin-right: 3px; }
.grid button > svg { flex: none; width: 96px; height: 68px; }
.f { fill: #fff; stroke: #000; }
.g { fill: #808080; }
.vscroll { flex: none; width: 22px; display: flex; flex-direction: column; background: #f5f4ee; margin-left: 1px; }
.vscroll button { flex: none; height: 20px; border: 1px solid #9fb6e8; border-radius: 2px; background: linear-gradient(135deg, #e0e9fe, #b9ccf8); color: #4a6898; display: grid; place-items: center; }
.vscroll button:last-child { margin-top: auto; }
.vscroll svg { width: 9px; height: 6px; }
.knob { height: 108px; margin-top: 1px; border: 1px solid #9fb6e8; border-radius: 2px; background: repeating-linear-gradient(#f4f8ff 0 1px, #8ea6dc 1px 2px) center / 7px 8px no-repeat, linear-gradient(90deg, #ccdafd, #bccdf9); }
.check { flex: none; display: flex; align-items: center; gap: 2px; height: 24px; margin-top: 3px; margin-bottom: -2px; white-space: nowrap; font-size: 13px; }
.check input { appearance: none; flex: none; width: 17px; height: 16px; margin-left: 1px; border: 1px solid #1c5180; background: #fff; display: grid; place-items: center; }
.check input:checked::before { content: ""; width: 10px; height: 5px; border: solid #21a121; border-width: 0 0 3px 3px; transform: rotate(-45deg); margin-bottom: 3px; }

.txt.acts { width: 35px; gap: 3px; margin: 0 1px 0 0; }
.txt.shapes { width: 97px; gap: 4px; margin: 0; }
.status { flex: none; height: 28px; display: grid; grid-template-columns: 284fr 284fr 235fr 42px 84px; gap: 5px; padding: 3px 1px 2px 4px; background: #ece9d8; border-top: 1px solid #b8b09c; }
.status span { display: flex; align-items: center; justify-content: center; border: 1px solid #d8d2bd; white-space: nowrap; }
.status b { margin-left: 4px; }
.status .size-grip { justify-content: flex-end; align-items: flex-end; }
.size-grip svg { width: 12px; height: 12px; }
```
